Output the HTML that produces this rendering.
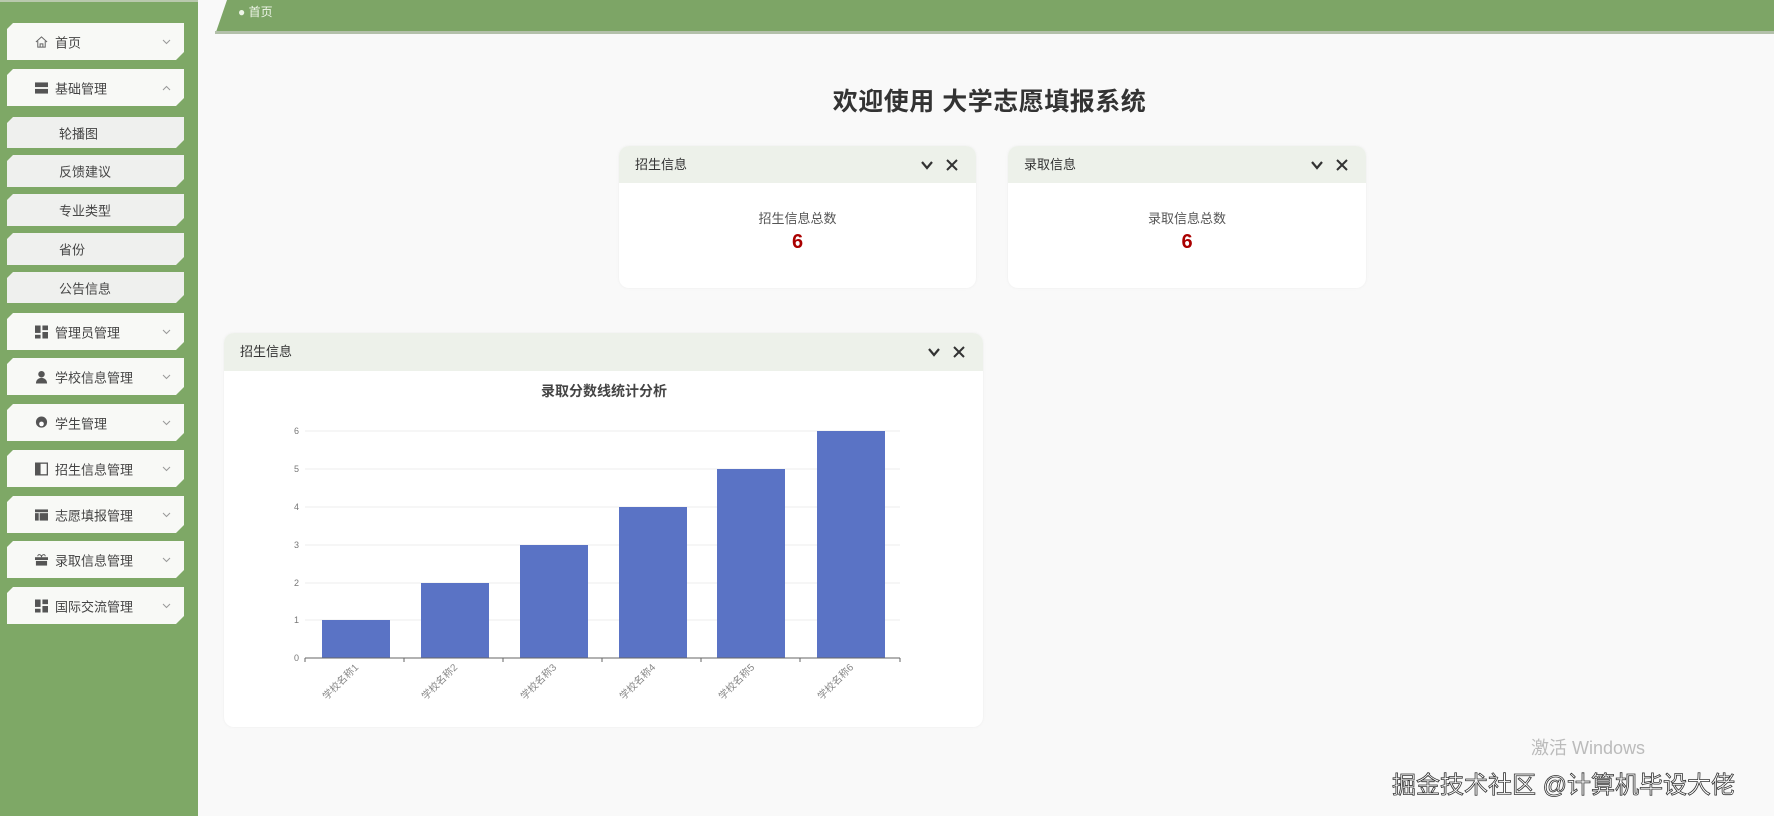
<!DOCTYPE html>
<html><head><meta charset="utf-8"><style>
*{margin:0;padding:0;box-sizing:border-box}
body{width:1774px;height:816px;overflow:hidden;background:#f9f9f9;font-family:"Liberation Sans","Noto Sans CJK SC",sans-serif;position:relative;color:#333}
.side{position:absolute;left:0;top:0;width:198px;height:816px;background:#7ea866}
.side .topline{position:absolute;left:0;top:0;width:198px;height:2px;background:#b9c9ad}
.it{position:absolute;left:7px;width:177px;background:#f8f9f6;clip-path:polygon(6px 0,100% 0,100% calc(100% - 8px),calc(100% - 8px) 100%,0 100%,0 6px);font-size:13px;color:#444}
.it .ic{position:absolute;left:28px;top:50%;transform:translateY(-50%);width:13px;height:13px}
.it .t{position:absolute;left:48px;top:50%;transform:translateY(-50%)}
.it .ar{position:absolute;right:13px;top:50%;transform:translateY(-50%);width:9px;height:6px}
.sub{background:#eff0ee}
.sub .t{left:52px}
.bar{position:absolute;left:216px;top:0;width:1558px;height:32px;background:#7da566;clip-path:polygon(11px 0,100% 0,100% 100%,0 100%)}
.barline{position:absolute;left:215px;top:31px;width:1559px;height:3px;background:#b3c0aa}
.crumb{position:absolute;left:238px;top:3px;color:#eef5e8;font-size:12px}
h1{position:absolute;left:0;width:1774px;padding-left:205px;text-align:center;top:82px;font-size:25px;font-weight:bold;color:#333;letter-spacing:0.5px}
.card{position:absolute;background:#fff;border-radius:10px;overflow:hidden;box-shadow:0 0 3px rgba(0,0,0,.05)}
.hd{height:37px;background:#edf1ea;font-size:13px;color:#333;padding-left:16px;line-height:37px;position:relative}
.hd .btn{position:absolute;top:12px;right:16px;width:40px;height:14px}
.lbl{text-align:center;font-size:13px;color:#555;margin-top:25px}
.num{text-align:center;font-size:20px;color:#a00;font-weight:bold;margin-top:4px}
.wm{position:absolute;font-size:24px;color:#fff;-webkit-text-stroke:0.8px #333}
</style></head><body>
<svg width="0" height="0" style="position:absolute"><defs>
<symbol id="dn" viewBox="0 0 9 6"><path d="M1 1l3.5 3.5L8 1" fill="none" stroke="#999" stroke-width="1"/></symbol>
<symbol id="up" viewBox="0 0 9 6"><path d="M1 5l3.5-3.5L8 5" fill="none" stroke="#999" stroke-width="1"/></symbol>
<symbol id="hb" viewBox="0 0 40 14"><path d="M2 4l5 6 5-6" fill="none" stroke="#333" stroke-width="2.2"/><path d="M27 2l10 10M37 2L27 12" fill="none" stroke="#333" stroke-width="2"/></symbol>
</defs></svg>
<div class="side"><div class="topline"></div>
<div class="it" style="top:23px;height:37px"><svg class="ic" viewBox="0 0 14 14"><path d="M1 7 7 1.5 13 7M3 6v6.5h8V6M5.5 12.5V9h3v3.5" fill="none" stroke="#666" stroke-width="1.1"/></svg><span class="t">首页</span><svg class="ar"><use href="#dn"/></svg></div>
<div class="it" style="top:69px;height:37px"><svg class="ic" viewBox="0 0 14 14"><rect x="0" y="1" width="14" height="5" fill="#555"/><rect x="0" y="8" width="14" height="5" fill="#555"/></svg><span class="t">基础管理</span><svg class="ar"><use href="#up"/></svg></div>
<div class="it sub" style="top:117px;height:31px"><span class="t">轮播图</span></div>
<div class="it sub" style="top:155px;height:32px"><span class="t">反馈建议</span></div>
<div class="it sub" style="top:194px;height:32px"><span class="t">专业类型</span></div>
<div class="it sub" style="top:233px;height:32px"><span class="t">省份</span></div>
<div class="it sub" style="top:272px;height:31px"><span class="t">公告信息</span></div>
<div class="it" style="top:313px;height:37px"><svg class="ic" viewBox="0 0 14 14"><rect x="0" y="0" width="6" height="8" fill="#555"/><rect x="8" y="0" width="6" height="5" fill="#555"/><rect x="0" y="10" width="6" height="4" fill="#555"/><rect x="8" y="7" width="6" height="7" fill="#555"/></svg><span class="t">管理员管理</span><svg class="ar"><use href="#dn"/></svg></div>
<div class="it" style="top:358px;height:37px"><svg class="ic" viewBox="0 0 14 14"><circle cx="7" cy="4" r="3.5" fill="#555"/><path d="M1 14c0-4 3-6 6-6s6 2 6 6z" fill="#555"/></svg><span class="t">学校信息管理</span><svg class="ar"><use href="#dn"/></svg></div>
<div class="it" style="top:404px;height:37px"><svg class="ic" viewBox="0 0 14 14"><circle cx="7" cy="6" r="6" fill="#555"/><circle cx="7" cy="8" r="2.5" fill="#fff"/></svg><span class="t">学生管理</span><svg class="ar"><use href="#dn"/></svg></div>
<div class="it" style="top:450px;height:37px"><svg class="ic" viewBox="0 0 14 14"><rect x="0.7" y="0.7" width="12.6" height="12.6" fill="none" stroke="#555" stroke-width="1.4"/><rect x="0" y="0" width="6" height="14" fill="#555"/></svg><span class="t">招生信息管理</span><svg class="ar"><use href="#dn"/></svg></div>
<div class="it" style="top:496px;height:37px"><svg class="ic" viewBox="0 0 14 14"><rect x="0" y="1" width="14" height="3" fill="#555"/><rect x="0" y="5" width="4" height="8" fill="#555"/><rect x="5" y="5" width="9" height="8" fill="#555"/></svg><span class="t">志愿填报管理</span><svg class="ar"><use href="#dn"/></svg></div>
<div class="it" style="top:541px;height:37px"><svg class="ic" viewBox="0 0 14 14"><rect x="0" y="4" width="14" height="3" fill="#555"/><rect x="1" y="8" width="12" height="5" fill="#555"/><path d="M3 3c0-3 4-2 4 1 0-3 4-4 4-1" fill="none" stroke="#555"/></svg><span class="t">录取信息管理</span><svg class="ar"><use href="#dn"/></svg></div>
<div class="it" style="top:587px;height:37px"><svg class="ic" viewBox="0 0 14 14"><rect x="0" y="0" width="6" height="8" fill="#555"/><rect x="8" y="0" width="6" height="5" fill="#555"/><rect x="0" y="10" width="6" height="4" fill="#555"/><rect x="8" y="7" width="6" height="7" fill="#555"/></svg><span class="t">国际交流管理</span><svg class="ar"><use href="#dn"/></svg></div>
</div>
<div class="bar"></div><div class="barline"></div>
<div class="crumb">● 首页</div>
<h1>欢迎使用 大学志愿填报系统</h1>
<div class="card" style="left:619px;top:146px;width:357px;height:142px"><div class="hd">招生信息<svg class="btn"><use href="#hb"/></svg></div><div class="lbl">招生信息总数</div><div class="num">6</div></div>
<div class="card" style="left:1008px;top:146px;width:358px;height:142px"><div class="hd">录取信息<svg class="btn"><use href="#hb"/></svg></div><div class="lbl">录取信息总数</div><div class="num">6</div></div>
<div class="card" style="left:224px;top:333px;width:759px;height:394px"><div class="hd" style="height:38px;line-height:38px">招生信息<svg class="btn"><use href="#hb"/></svg></div>
<svg style="position:absolute;left:0;top:0" width="759" height="394" font-family="Liberation Sans,Noto Sans CJK SC,sans-serif">
<text x="380" y="63" text-anchor="middle" font-size="14" font-weight="bold" fill="#444">录取分数线统计分析</text>
<g stroke="#eee" stroke-width="1"><line x1="81" x2="676" y1="98" y2="98"/><line x1="81" x2="676" y1="136" y2="136"/><line x1="81" x2="676" y1="174" y2="174"/><line x1="81" x2="676" y1="212" y2="212"/><line x1="81" x2="676" y1="250" y2="250"/><line x1="81" x2="676" y1="287" y2="287"/></g>
<g font-size="9" fill="#777" text-anchor="end"><text x="75" y="328">0</text><text x="75" y="290">1</text><text x="75" y="253">2</text><text x="75" y="215">3</text><text x="75" y="177">4</text><text x="75" y="139">5</text><text x="75" y="101">6</text></g>
<g fill="#5a73c5"><rect x="98" y="287" width="68" height="38"/><rect x="197" y="250" width="68" height="75"/><rect x="296" y="212" width="68" height="113"/><rect x="395" y="174" width="68" height="151"/><rect x="493" y="136" width="68" height="189"/><rect x="593" y="98" width="68" height="227"/></g>
<line x1="81" x2="676" y1="325" y2="325" stroke="#666"/>
<g stroke="#666"><line x1="81" x2="81" y1="325" y2="329"/><line x1="180" x2="180" y1="325" y2="329"/><line x1="279" x2="279" y1="325" y2="329"/><line x1="378" x2="378" y1="325" y2="329"/><line x1="477" x2="477" y1="325" y2="329"/><line x1="576" x2="576" y1="325" y2="329"/><line x1="676" x2="676" y1="325" y2="329"/></g>
<g font-size="10" fill="#888" text-anchor="end"><text transform="translate(135,335) rotate(-45)">学校名称1</text><text transform="translate(234,335) rotate(-45)">学校名称2</text><text transform="translate(333,335) rotate(-45)">学校名称3</text><text transform="translate(432,335) rotate(-45)">学校名称4</text><text transform="translate(531,335) rotate(-45)">学校名称5</text><text transform="translate(630,335) rotate(-45)">学校名称6</text></g>
</svg></div>
<div style="position:absolute;left:1531px;top:734px;font-size:18px;color:#bbb">激活 Windows</div>
<div class="wm" style="left:1392px;top:765px">掘金技术社区 @计算机毕设大佬</div>
</body></html>
